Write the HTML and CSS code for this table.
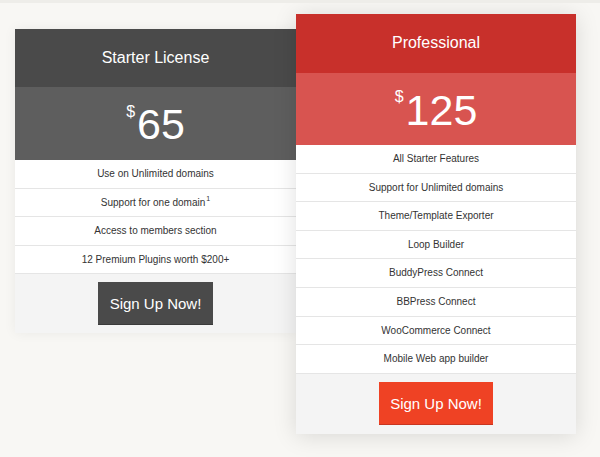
FILE: index.html
```html
<!DOCTYPE html>
<html lang="en">
<head>
  <meta charset="UTF-8">
  <meta name="viewport" content="width=device-width, initial-scale=1.0">
  <title>Pricing Tables</title>
  <link rel="stylesheet" href="styles.css">
</head>
<body>
  <div class="pricing">
    <div class="plan plan-starter">
      <div class="plan-title">Starter License</div>
      <div class="plan-price"><sup>$</sup>65</div>
      <ul class="plan-features">
        <li>Use on Unlimited domains</li>
        <li>Support for one domain<sup>1</sup></li>
        <li>Access to members section</li>
        <li>12 Premium Plugins worth $200+</li>
      </ul>
      <div class="plan-footer">
        <a href="#" class="signup">Sign Up Now!</a>
      </div>
    </div>
    <div class="plan plan-pro">
      <div class="plan-title">Professional</div>
      <div class="plan-price"><sup>$</sup>125</div>
      <ul class="plan-features">
        <li>All Starter Features</li>
        <li>Support for Unlimited domains</li>
        <li>Theme/Template Exporter</li>
        <li>Loop Builder</li>
        <li>BuddyPress Connect</li>
        <li>BBPress Connect</li>
        <li>WooCommerce Connect</li>
        <li>Mobile Web app builder</li>
      </ul>
      <div class="plan-footer">
        <a href="#" class="signup">Sign Up Now!</a>
      </div>
    </div>
  </div>
</body>
</html>
```

FILE: styles.css
```css
/* Page */
body {
  font-family: 'Liberation Sans', Arial, sans-serif;
  margin: 0;
  padding: 0;
  background: #f8f7f4;
  border-top: 3px solid #eeede9;
  min-height: 454px;
}

.pricing {
  display: flex;
  align-items: flex-start;
  padding: 11px 0 0 15px;
}

/* Plan card */
.plan {
  width: 281px;
  background: #fff;
  text-align: center;
  box-shadow: 0 0 12px rgba(0, 0, 0, 0.06);
}

.plan-starter {
  margin-top: 15px;
}

.plan-pro {
  width: 280px;
  position: relative;
  z-index: 1;
  box-shadow: 0 2px 22px rgba(0, 0, 0, 0.13);
}

.plan-title {
  height: 58px;
  line-height: 58px;
  font-size: 16px;
  color: #fff;
  background: #4a4a4a;
}

.plan-price {
  height: 73px;
  line-height: 75px;
  font-size: 43px;
  color: #fff;
  background: #5e5e5e;
}

.plan-price sup {
  font-size: 16px;
  vertical-align: top;
  position: relative;
  top: -13px;
  margin-right: 2px;
}

.plan-pro .plan-title {
  height: 59px;
  line-height: 57px;
  background: #c8302b;
}

.plan-pro .plan-price {
  height: 72px;
  line-height: 74px;
  background: #d85450;
}

/* Features */
.plan-features {
  list-style: none;
  margin: 0;
  padding: 0;
}

.plan-features li {
  height: 27.6px;
  line-height: 28px;
  font-size: 10px;
  color: #333;
  border-bottom: 1px solid #e5e5e5;
}

.plan-features li sup {
  font-size: 7px;
  vertical-align: top;
  line-height: 20px;
  margin-left: 1px;
}

/* Footer */
.plan-footer {
  background: #f4f4f4;
  padding: 8px 0 9px;
}

.plan-starter .plan-footer {
  padding-bottom: 8px;
}

.signup {
  display: inline-block;
  width: 115px;
  height: 43px;
  line-height: 43px;
  box-sizing: border-box;
  font-size: 15px;
  color: #fff;
  text-decoration: none;
  background: #4a4a4a;
  border-bottom: 1px solid #3a3a3a;
}

.plan-pro .signup {
  width: 114px;
  background: #ef4224;
  border-bottom-color: #c83520;
}
```
